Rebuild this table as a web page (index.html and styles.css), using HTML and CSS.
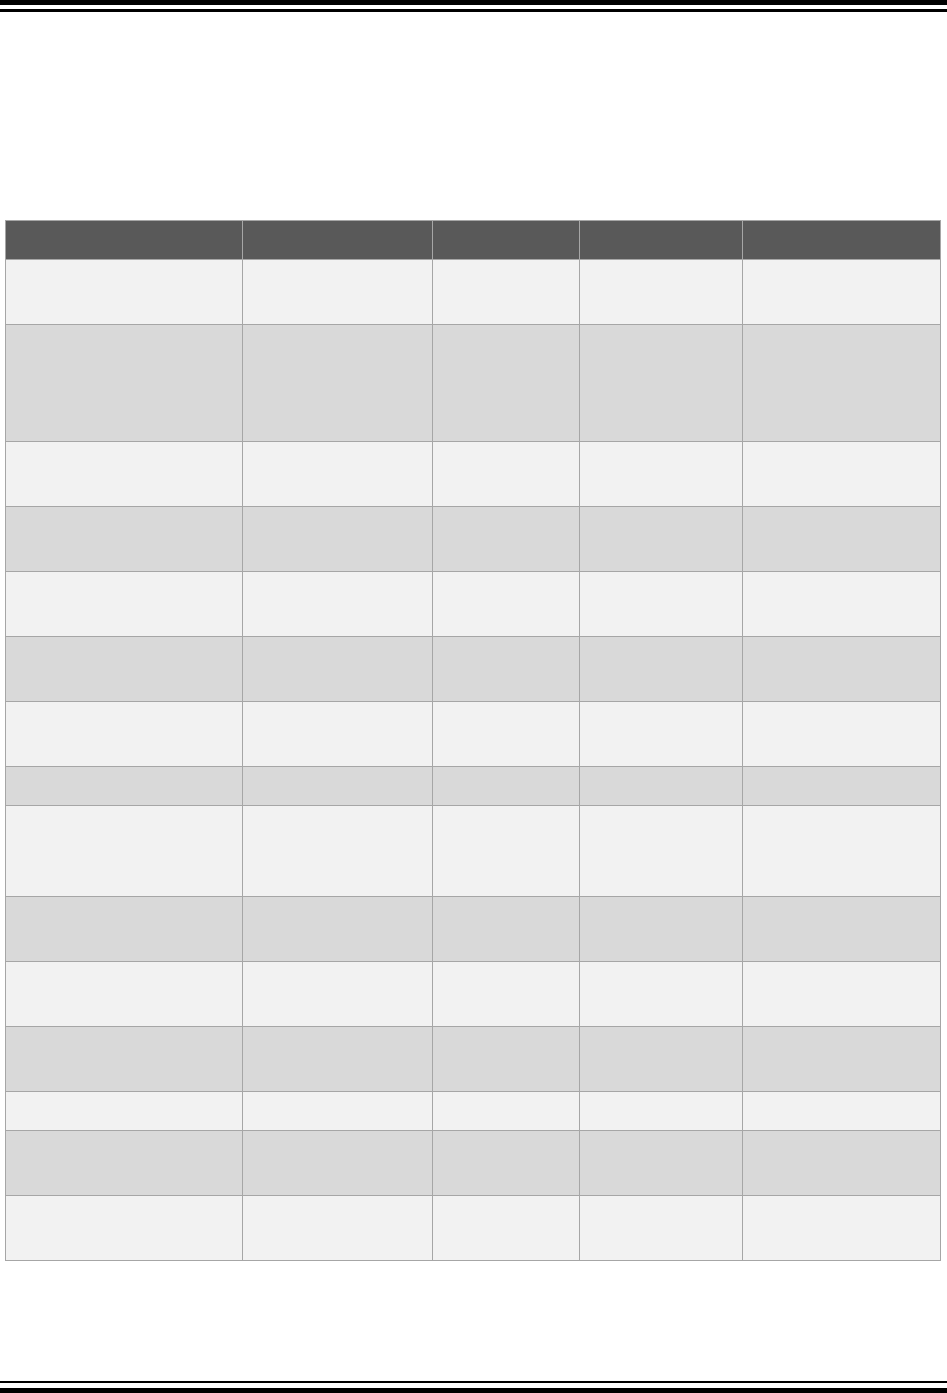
FILE: index.html
```html
<!DOCTYPE html>
<html lang="en">
<head>
<meta charset="utf-8">
<title>Table</title>
<link rel="stylesheet" href="styles.css">
</head>
<body>
<div class="page">
  <header class="rule rule-top">
    <div class="thick"></div>
    <div class="thin"></div>
  </header>
  <main class="content">
    <div class="grid" role="table">
      <div class="row head" role="row"><div class="c"></div><div class="c"></div><div class="c"></div><div class="c"></div><div class="c"></div></div>
      <div class="row light h65" role="row"><div class="c"></div><div class="c"></div><div class="c"></div><div class="c"></div><div class="c"></div></div>
      <div class="row dark h117" role="row"><div class="c"></div><div class="c"></div><div class="c"></div><div class="c"></div><div class="c"></div></div>
      <div class="row light h65" role="row"><div class="c"></div><div class="c"></div><div class="c"></div><div class="c"></div><div class="c"></div></div>
      <div class="row dark h65" role="row"><div class="c"></div><div class="c"></div><div class="c"></div><div class="c"></div><div class="c"></div></div>
      <div class="row light h65" role="row"><div class="c"></div><div class="c"></div><div class="c"></div><div class="c"></div><div class="c"></div></div>
      <div class="row dark h65" role="row"><div class="c"></div><div class="c"></div><div class="c"></div><div class="c"></div><div class="c"></div></div>
      <div class="row light h65" role="row"><div class="c"></div><div class="c"></div><div class="c"></div><div class="c"></div><div class="c"></div></div>
      <div class="row dark h39" role="row"><div class="c"></div><div class="c"></div><div class="c"></div><div class="c"></div><div class="c"></div></div>
      <div class="row light h91" role="row"><div class="c"></div><div class="c"></div><div class="c"></div><div class="c"></div><div class="c"></div></div>
      <div class="row dark h65" role="row"><div class="c"></div><div class="c"></div><div class="c"></div><div class="c"></div><div class="c"></div></div>
      <div class="row light h65" role="row"><div class="c"></div><div class="c"></div><div class="c"></div><div class="c"></div><div class="c"></div></div>
      <div class="row dark h65" role="row"><div class="c"></div><div class="c"></div><div class="c"></div><div class="c"></div><div class="c"></div></div>
      <div class="row light h39" role="row"><div class="c"></div><div class="c"></div><div class="c"></div><div class="c"></div><div class="c"></div></div>
      <div class="row dark h65" role="row"><div class="c"></div><div class="c"></div><div class="c"></div><div class="c"></div><div class="c"></div></div>
      <div class="row light h65" role="row"><div class="c"></div><div class="c"></div><div class="c"></div><div class="c"></div><div class="c"></div></div>
    </div>
  </main>
  <footer class="rule rule-bottom">
    <div class="thin"></div>
    <div class="thick"></div>
  </footer>
</div>
</body>
</html>
```

FILE: styles.css
```css
html, body {
  margin: 0;
  padding: 0;
  background: #ffffff;
  font-family: "Liberation Sans", Arial, sans-serif;
}

.page {
  display: flex;
  flex-direction: column;
  min-height: 1393px;
}

.rule {
  display: flex;
  flex-direction: column;
}

.rule-top {
  gap: 4px;
}

.rule-bottom {
  gap: 5px;
  margin-top: auto;
}

.rule-top .thick { height: 5px; background: #000; }
.rule-top .thin { height: 3px; background: #000; }
.rule-bottom .thin { height: 2px; background: #000; }
.rule-bottom .thick { height: 5px; background: #000; }

.content {
  padding: 208px 0 0 5px;
}

.grid {
  width: 936px;
  border-top: 1px solid #a6a6a6;
  border-left: 1px solid #a6a6a6;
  box-sizing: border-box;
}

.row {
  display: grid;
  grid-template-columns: 237px 190px 147px 163px 198px;
  height: 65px;
}

.row .c {
  border-right: 1px solid #a6a6a6;
  border-bottom: 1px solid #a6a6a6;
  box-sizing: border-box;
}

.head { height: 39px; background: #595959; }
.light { background: #f2f2f2; }
.dark { background: #d9d9d9; }

.h39 { height: 39px; }
.h65 { height: 65px; }
.h91 { height: 91px; }
.h117 { height: 117px; }
```
